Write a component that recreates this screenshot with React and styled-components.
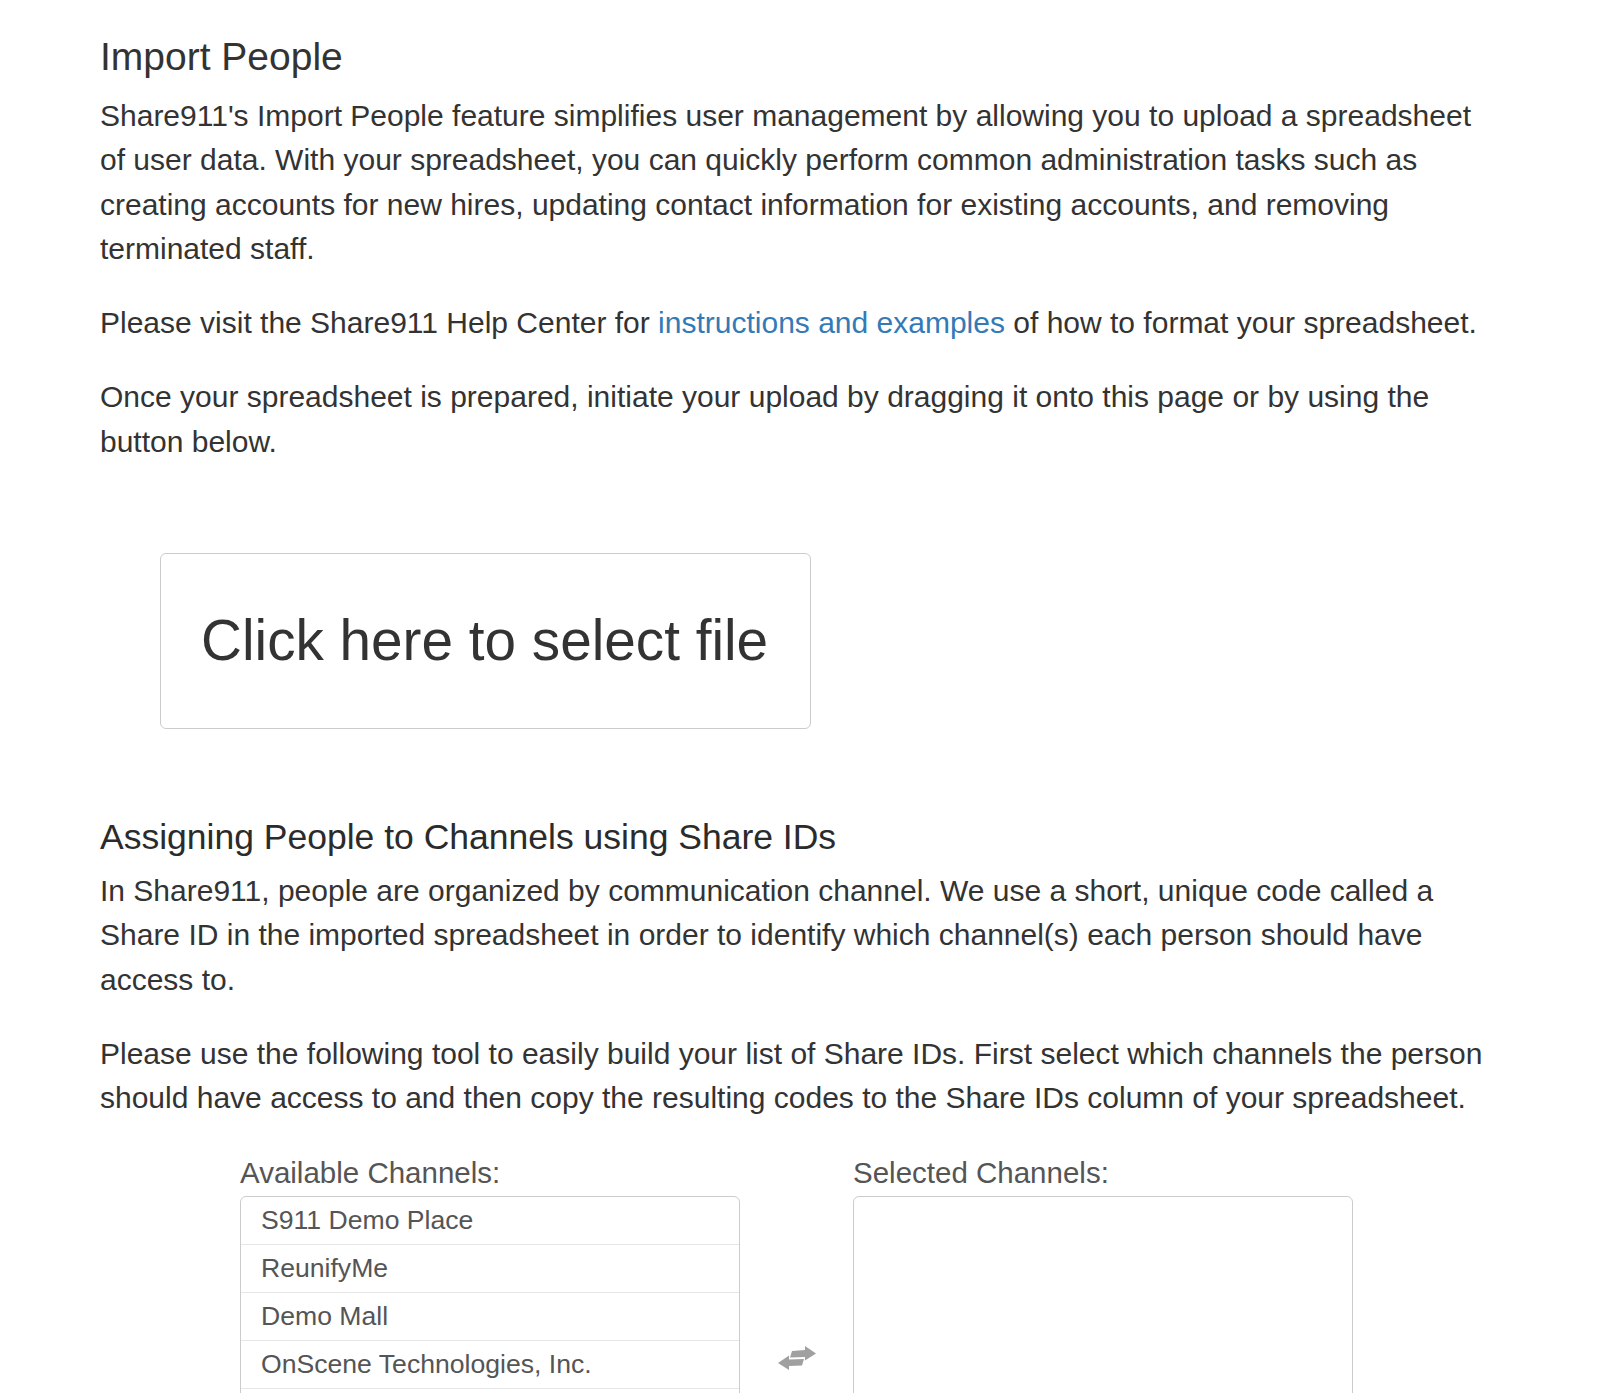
import React from 'react'
import styled, { createGlobalStyle } from 'styled-components'

const GlobalStyle = createGlobalStyle`
  body {
    margin: 0;
    background: #fff;
    color: #333;
    font-family: "Liberation Sans", Arial, sans-serif;
  }
`

const Page = styled.div`
  width: 1400px;
  padding: 35px 0 0 100px;
`

const Title = styled.h1`
  margin: 0 0 16px;
  font-size: 39px;
  line-height: 43px;
  font-weight: 400;
  color: #333;
`

const SubTitle = styled.h2`
  margin: 87px 0 11px;
  font-size: 35.5px;
  line-height: 42px;
  font-weight: 400;
  color: #2b2b2b;
`

const Text = styled.p`
  margin: 0 0 30px;
  font-size: 30px;
  line-height: 44.3px;
`

const TextLink = styled.a`
  color: #337ab7;
  text-decoration: none;
`

const DropZone = styled.div`
  display: inline-block;
  margin: 59px 0 0 60px;
  padding: 50px 42px 50px 40px;
  border: 1px solid #ccc;
  border-radius: 6px;
  font-size: 56.7px;
  line-height: 74px;
  color: #333;
  cursor: pointer;
`

const Picker = styled.div`
  display: grid;
  grid-template-columns: 500px 113px 500px;
  margin: 35px 0 0 140px;
`

const Column = styled.div`
  display: flex;
  flex-direction: column;
`

const Label = styled.div`
  font-size: 29.5px;
  line-height: 34px;
  color: #555;
  margin-bottom: 6px;
`

const ListBox = styled.ul`
  margin: 0;
  padding: 0;
  list-style: none;
  height: 322px;
  overflow: hidden;
  border: 1px solid #ccc;
  border-radius: 6px;
`

const Item = styled.li`
  padding: 7px 20px;
  line-height: 33px;
  font-size: 26.6px;
  color: #555;
  border-bottom: 1px solid #e6e6e6;
`

const Swap = styled.div`
  display: flex;
  align-items: center;
  justify-content: center;
  padding-top: 40px;
  color: #a0a0a0;
`

function TransferIcon() {
  return (
    <svg width="40" height="26" viewBox="0 0 40 26" fill="currentColor">
      <polygon points="15,6 28,5 28,1 39,8.5 28,15.5 28,12 13,12.5" />
      <polygon points="27,14 12,14.5 12,10.5 1,18 12,25 12,21 25,20.5" />
    </svg>
  )
}

const available = ['S911 Demo Place', 'ReunifyMe', 'Demo Mall', 'OnScene Technologies, Inc.']

export default function App() {
  return (
    <>
      <GlobalStyle />
      <Page>
        <Title>Import People</Title>
        <Text>
          Share911's Import People feature simplifies user management by allowing you to upload a
          spreadsheet of user data. With your spreadsheet, you can quickly perform common
          administration tasks such as creating accounts for new hires, updating contact information
          for existing accounts, and removing terminated staff.
        </Text>
        <Text>
          Please visit the Share911 Help Center for{' '}
          <TextLink href="#">instructions and examples</TextLink> of how to format your spreadsheet.
        </Text>
        <Text>
          Once your spreadsheet is prepared, initiate your upload by dragging it onto this page or by
          using the button below.
        </Text>

        <DropZone>Click here to select file</DropZone>

        <SubTitle>Assigning People to Channels using Share IDs</SubTitle>
        <Text>
          In Share911, people are organized by communication channel. We use a short, unique code
          called a Share ID in the imported spreadsheet in order to identify which channel(s) each
          person should have access to.
        </Text>
        <Text>
          Please use the following tool to easily build your list of Share IDs. First select which
          channels the person should have access to and then copy the resulting codes to the Share
          IDs column of your spreadsheet.
        </Text>

        <Picker>
          <Column>
            <Label>Available Channels:</Label>
            <ListBox>
              {available.map(name => (
                <Item key={name}>{name}</Item>
              ))}
            </ListBox>
          </Column>
          <Swap>
            <TransferIcon />
          </Swap>
          <Column>
            <Label>Selected Channels:</Label>
            <ListBox />
          </Column>
        </Picker>
      </Page>
    </>
  )
}
